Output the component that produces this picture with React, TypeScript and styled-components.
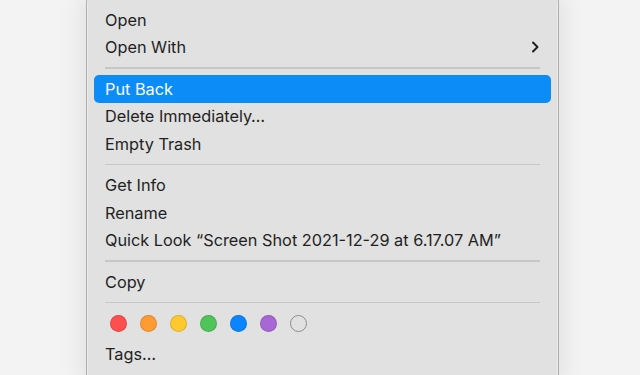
import React from 'react';
import styled, { createGlobalStyle } from 'styled-components';

const GlobalStyle = createGlobalStyle`
  html, body {
    margin: 0;
    padding: 0;
    background: #f3f3f3;
    overflow: hidden;
  }
  body {
    font-family: Inter, "Noto Sans", "Liberation Sans", sans-serif;
  }
`;

const Stage = styled.div`
  width: 640px;
  height: 375px;
  overflow: hidden;
  padding-left: 86px;
  box-sizing: border-box;
`;

const Menu = styled.div`
  width: 473px;
  margin-top: -9px;
  padding: 14px 7px 20px;
  box-sizing: border-box;
  background: #e0e1e0;
  border: 1px solid rgba(0, 0, 0, 0.22);
  border-radius: 12px;
  box-shadow: inset 0 0 0 1px rgba(255, 255, 255, 0.35),
    0 0 28px rgba(0, 0, 0, 0.1);
`;

const Item = styled.div<{ $active?: boolean }>`
  height: 27.5px;
  display: flex;
  align-items: center;
  justify-content: space-between;
  padding: 0 11px;
  border-radius: 5px;
  font-size: 16.3px;
  letter-spacing: 0;
  color: ${(p) => (p.$active ? '#ffffff' : '#1f1f1f')};
  background: ${(p) => (p.$active ? '#0b8cf7' : 'transparent')};
  white-space: nowrap;
`;

const Separator = styled.div`
  height: 14px;
  display: flex;
  align-items: center;
  padding: 0 11px;

  &::after {
    content: '';
    flex: 1;
    height: 1.5px;
    background: #c6c7c6;
  }
`;

const DotRow = styled.div`
  height: 31px;
  display: flex;
  align-items: flex-start;
  gap: 12.5px;
  padding: 5px 0 0 15.5px;
  box-sizing: border-box;
`;

const Dot = styled.span<{ $color?: string }>`
  width: 17.5px;
  height: 17.5px;
  border-radius: 50%;
  box-sizing: border-box;
  background: ${(p) => p.$color ?? 'transparent'};
  border: 1px solid ${(p) => (p.$color ? 'rgba(0, 0, 0, 0.12)' : '#8c8c8c')};
`;

const Chevron = () => (
  <svg width="10" height="14" viewBox="0 0 10 14" fill="none">
    <path
      d="M3 2.5 L7.5 7 L3 11.5"
      stroke="#1f1f1f"
      strokeWidth="2"
      strokeLinecap="round"
      strokeLinejoin="round"
    />
  </svg>
);

const tagColors = ['#fd4f50', '#fe9b32', '#fec92f', '#4fc459', '#0a85fe', '#a767d5'];

export default function App() {
  return (
    <>
      <GlobalStyle />
      <Stage>
        <Menu>
          <Item>Open</Item>
          <Item>
            Open With
            <Chevron />
          </Item>
          <Separator />
          <Item $active>Put Back</Item>
          <Item>Delete Immediately…</Item>
          <Item>Empty Trash</Item>
          <Separator />
          <Item>Get Info</Item>
          <Item>Rename</Item>
          <Item>Quick Look “Screen Shot 2021-12-29 at 6.17.07 AM”</Item>
          <Separator />
          <Item>Copy</Item>
          <Separator />
          <DotRow>
            {tagColors.map((c) => (
              <Dot key={c} $color={c} />
            ))}
            <Dot />
          </DotRow>
          <Item>Tags…</Item>
        </Menu>
      </Stage>
    </>
  );
}
